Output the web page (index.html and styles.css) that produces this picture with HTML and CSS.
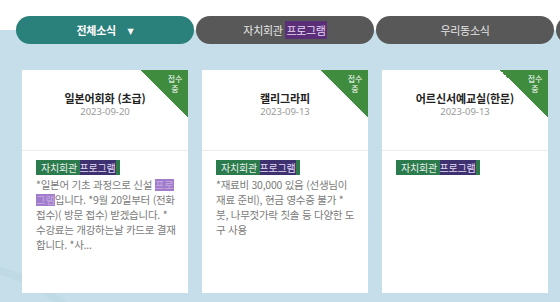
FILE: index.html
```html
<!DOCTYPE html>
<html lang="ko">
<head>
<meta charset="utf-8">
<link rel="stylesheet" href="styles.css">
</head>
<body>
<div class="page">
  <nav class="tabs">
    <div class="tab tab-active">전체소식 <span class="caret">▼</span></div>
    <div class="tab">자치회관 <span class="hl-tab">프로그램</span></div>
    <div class="tab">우리동소식</div>
    <div class="tab"></div>
  </nav>
  <div class="cards">
    <article class="card">
      <div class="ribbon"><span>접수<br>중</span></div>
      <header class="card-head">
        <h2 class="title">일본어회화 (초급)</h2>
        <div class="date">2023-09-20</div>
      </header>
      <div class="card-body">
        <span class="tag">자치회관 <span class="hl-tag">프로그램</span></span>
        <p class="desc">*일본어 기초 과정으로 신설 <span class="hl-body">프로</span><span class="hl-body">그램</span>입니다. *9월 20일부터 (전화 접수)( 방문 접수) 받겠습니다. * 수강료는 개강하는날 카드로 결재합니다. *사...</p>
      </div>
    </article>
    <article class="card">
      <div class="ribbon"><span>접수<br>중</span></div>
      <header class="card-head">
        <h2 class="title">캘리그라피</h2>
        <div class="date">2023-09-13</div>
      </header>
      <div class="card-body">
        <span class="tag">자치회관 <span class="hl-tag">프로그램</span></span>
        <p class="desc">*재료비 30,000 있음 (선생님이 재료 준비), 현금 영수증 불가 * 붓, 나무젓가락 칫솔 등 다양한 도구 사용</p>
      </div>
    </article>
    <article class="card">
      <div class="ribbon"><span>접수<br>중</span></div>
      <header class="card-head">
        <h2 class="title">어르신서예교실(한문)</h2>
        <div class="date">2023-09-13</div>
      </header>
      <div class="card-body">
        <span class="tag">자치회관 <span class="hl-tag">프로그램</span></span>
      </div>
    </article>
  </div>
</div>
</body>
</html>
```
FILE: styles.css
```css
* { box-sizing: border-box; }
html, body { margin: 0; padding: 0; }
body {
  font-family: "Noto Sans CJK KR", "Noto Sans", sans-serif;
  background: #c6dee9;
}
.page {
  width: 560px;
  height: 302px;
  overflow: hidden;
  background:
    linear-gradient(180deg, #ffffff 0, #ffffff 30px, transparent 30px),
    radial-gradient(circle at -40px 420px, transparent 150px, #bfd9e5 151px, #bfd9e5 158px, transparent 159px),
    #c6dee9;
}
.tabs {
  display: flex;
  gap: 2px;
  padding: 16px 0 0 16px;
  white-space: nowrap;
}
.tab {
  flex: 0 0 178px;
  height: 28px;
  border-radius: 14px;
  background: #585858;
  color: #e6e6e6;
  font-size: 11px;
  line-height: 28px;
  text-align: center;
  letter-spacing: -0.3px;
}
.tab-active {
  background: #2a807b;
  color: #fff;
  font-weight: 700;
}
.caret {
  font-family: "DejaVu Sans", sans-serif;
  font-size: 8px;
  margin-left: 9px;
  vertical-align: 1px;
}
.hl-tab {
  background: #5a2f78;
  color: #e8d6f5;
  padding: 1px 1px;
}
.cards {
  display: flex;
  gap: 14px;
  margin-top: 26px;
  padding-left: 22px;
}
.card {
  position: relative;
  flex: 0 0 166px;
  height: 223px;
  background: #fff;
  overflow: hidden;
}
.ribbon {
  position: absolute;
  top: 0;
  right: 0;
  width: 48px;
  height: 48px;
  background: linear-gradient(225deg, #3f8c3f 0, #3f8c3f 50%, transparent 50%);
}
.ribbon span {
  position: absolute;
  top: 4px;
  right: 5px;
  width: 16px;
  text-align: center;
  color: #fff;
  font-size: 8px;
  line-height: 9.5px;
}
.card-head {
  height: 81px;
  padding-top: 21px;
  border-bottom: 1px solid #ececec;
  text-align: center;
}
.title {
  margin: 0;
  font-size: 11px;
  line-height: 14px;
  font-weight: 700;
  color: #222;
  letter-spacing: -0.1px;
}
.date {
  font-size: 9.5px;
  line-height: 14px;
  color: #9a9a9a;
  font-family: "Noto Sans", sans-serif;
}
.card-body {
  padding: 2px 12px 0 14px;
}
.tag {
  display: inline-block;
  background: #2c7b4c;
  color: #e9f2ec;
  font-size: 10px;
  line-height: 15px;
  padding: 0 4px 0 5px;
  letter-spacing: -0.2px;
}
.hl-tag {
  background: #3e3170;
  color: #e3d8f2;
}
.desc {
  margin: 0;
  font-size: 10.5px;
  line-height: 15px;
  color: #7a7a7a;
  letter-spacing: -0.26px;
  word-break: break-all;
}
.hl-body {
  display: inline-block;
  line-height: 12px;
  background: #a07ccb;
  color: #c5aae2;
}
```
